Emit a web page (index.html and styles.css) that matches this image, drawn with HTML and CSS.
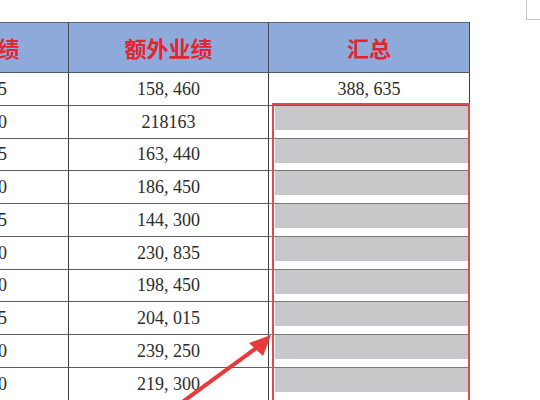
FILE: index.html
```html
<!DOCTYPE html>
<html lang="zh">
<head>
<meta charset="utf-8">
<link rel="stylesheet" href="styles.css">
</head>
<body>
<div class="page">
  <div class="topbar"><div class="corner"></div></div>
  <div class="sheet">
    <div class="grid">
      <div class="cell head">基本业绩</div>
      <div class="cell head">额外业绩</div>
      <div class="cell head">汇总</div>

      <div class="cell num">230<span class="c">,</span>175</div>
      <div class="cell num">158<span class="c">,</span>460</div>
      <div class="cell num">388<span class="c">,</span>635</div>

      <div class="cell num">205<span class="c">,</span>430</div>
      <div class="cell num">218163</div>
      <div class="cell blank"><div class="fill"></div></div>

      <div class="cell num">196<span class="c">,</span>225</div>
      <div class="cell num">163<span class="c">,</span>440</div>
      <div class="cell blank"><div class="fill"></div></div>

      <div class="cell num">210<span class="c">,</span>340</div>
      <div class="cell num">186<span class="c">,</span>450</div>
      <div class="cell blank"><div class="fill"></div></div>

      <div class="cell num">188<span class="c">,</span>615</div>
      <div class="cell num">144<span class="c">,</span>300</div>
      <div class="cell blank"><div class="fill"></div></div>

      <div class="cell num">224<span class="c">,</span>560</div>
      <div class="cell num">230<span class="c">,</span>835</div>
      <div class="cell blank"><div class="fill"></div></div>

      <div class="cell num">201<span class="c">,</span>780</div>
      <div class="cell num">198<span class="c">,</span>450</div>
      <div class="cell blank"><div class="fill"></div></div>

      <div class="cell num">215<span class="c">,</span>095</div>
      <div class="cell num">204<span class="c">,</span>015</div>
      <div class="cell blank"><div class="fill"></div></div>

      <div class="cell num">232<span class="c">,</span>410</div>
      <div class="cell num">239<span class="c">,</span>250</div>
      <div class="cell blank"><div class="fill"></div></div>

      <div class="cell num">198<span class="c">,</span>720</div>
      <div class="cell num">219<span class="c">,</span>300</div>
      <div class="cell blank"><div class="fill"></div></div>
    </div>
    <div class="highlight"></div>
    <svg class="arrow" width="540" height="378" viewBox="0 22 540 378">
      <line x1="181" y1="403" x2="259" y2="346" stroke="#e8393b" stroke-width="4" stroke-linecap="round"/>
      <polygon points="271,335 249,343 263,356" fill="#e8393b"/>
    </svg>
  </div>
</div>
</body>
</html>
```
FILE: styles.css
```css
html, body {
  margin: 0;
  padding: 0;
  background: #ffffff;
}
.page {
  width: 540px;
  height: 400px;
  overflow: hidden;
  background: #ffffff;
}
.topbar {
  height: 22px;
  display: flex;
  justify-content: flex-end;
}
.corner {
  width: 14px;
  height: 20px;
  box-sizing: border-box;
  border-left: 1px solid #c9c9c9;
  border-bottom: 1px solid #c9c9c9;
}
.sheet {
  position: relative;
  width: 540px;
  height: 378px;
  overflow: hidden;
}
.grid {
  display: grid;
  grid-template-columns: 186px 200px 201px;
  grid-template-rows: 51px;
  grid-auto-rows: 32.75px;
  margin-left: -117px;
  width: 587px;
}
.cell {
  box-sizing: border-box;
  border-right: 1px solid #3f3f3f;
  border-bottom: 1px solid #5e5e5e;
  display: flex;
  align-items: center;
  justify-content: center;
}
.head {
  background: #8eaadb;
  border-top: 1px solid #5a6478;
  border-bottom-color: #4f5a70;
  border-right-color: #3f4656;
  color: #e4232d;
  font-family: "Noto Sans CJK SC", "Noto Sans", sans-serif;
  font-weight: 700;
  font-size: 22px;
  padding-bottom: 1px;
}
.num {
  color: #2b2b2b;
  font-family: "Liberation Serif", "Noto Sans CJK SC", serif;
  font-size: 18px;
  padding-top: 1px;
}
.c {
  padding-right: 4.5px;
}
.blank {
  align-items: flex-start;
  padding-left: 6px;
  border-bottom-color: #7a7a7a;
}
.fill {
  width: 100%;
  height: 24px;
  background: #c8c7c9;
}
.highlight {
  position: absolute;
  left: 272px;
  top: 81px;
  width: 198px;
  height: 320px;
  box-sizing: border-box;
  border: 2px solid #df4a4c;
}
.arrow {
  position: absolute;
  left: 0;
  top: 0;
}
```
